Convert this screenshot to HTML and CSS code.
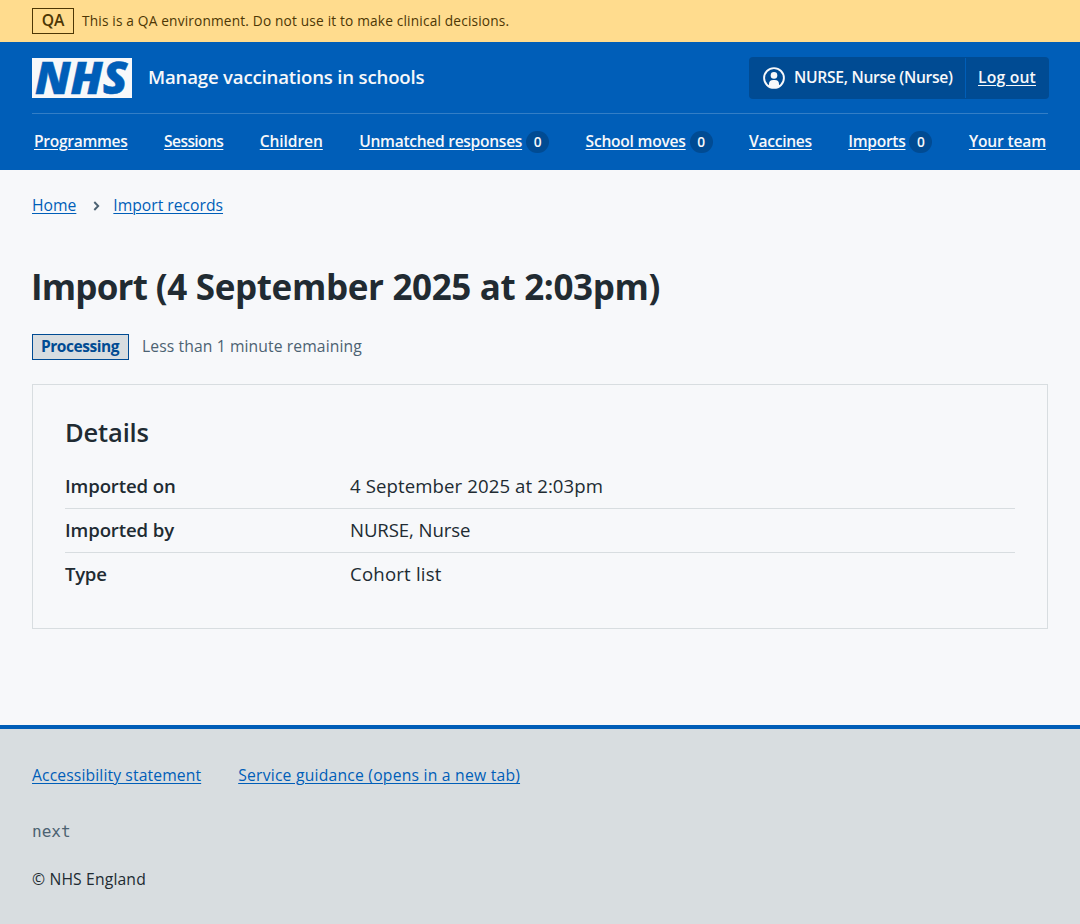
FILE: index.html
```html
<!DOCTYPE html>
<html lang="en">
<head>
<meta charset="utf-8">
<title>Import – Manage vaccinations in schools</title>
<link rel="stylesheet" href="styles.css">
</head>
<body>
<div class="environment">
  <strong class="environment-tag"><span>QA</span></strong>
  <span class="t-env">This is a QA environment. Do not use it to make clinical decisions.</span>
</div>
<header class="header">
  <div class="header-top">
    <svg class="logo" viewBox="0 0 100 40" width="100" height="40" role="img" aria-label="NHS">
      <rect class="logo-box" width="100" height="40"/>
      <text class="logo-text" x="3" y="35.7" textLength="92.5" lengthAdjust="spacingAndGlyphs">NHS</text>
    </svg>
    <span class="service">Manage vaccinations in schools</span>
    <div class="account">
      <div class="account-user">
        <svg width="22" height="22" viewBox="0 0 22 22" aria-hidden="true">
          <circle cx="11" cy="11" r="9.9" fill="none" stroke="#f7f8fa" stroke-width="1.9"/>
          <circle cx="11" cy="8.4" r="3.3" fill="#f7f8fa"/>
          <path d="M6 19.4V17a4.2 4 0 0 1 4.2-4h1.6a4.2 4 0 0 1 4.2 4v2.4Q11 22.3 6 19.4Z" fill="#f7f8fa"/>
        </svg>
        <span class="t-user">NURSE, Nurse (Nurse)</span>
      </div>
      <div class="account-out"><a class="t-logout" href="#">Log out</a></div>
    </div>
  </div>
  <nav class="nav">
    <div><a class="t-programmes" href="#">Programmes</a></div>
    <div><a class="t-sessions" href="#">Sessions</a></div>
    <div><a class="t-children" href="#">Children</a></div>
    <div><a class="t-unmatched" href="#">Unmatched responses</a><span class="count">0</span></div>
    <div><a class="t-moves" href="#">School moves</a><span class="count">0</span></div>
    <div><a class="t-vaccines" href="#">Vaccines</a></div>
    <div><a class="t-imports" href="#">Imports</a><span class="count">0</span></div>
    <div><a class="t-team" href="#">Your team</a></div>
  </nav>
</header>
<main class="main">
  <nav class="breadcrumb">
    <a href="#">Home</a>
    <svg width="7" height="10" viewBox="0 0 7 10" aria-hidden="true"><path d="M1.3 1 5.2 5 1.3 9" fill="none" stroke="#4c6272" stroke-width="1.9"/></svg>
    <a href="#">Import records</a>
  </nav>
  <h1 class="title"><span class="title-lead">Import</span> (4 September 2025 at 2:03pm)</h1>
  <div class="status">
    <strong class="tag">Processing</strong>
    <span class="t-remaining">Less than 1 minute remaining</span>
  </div>
  <section class="card">
    <h2 class="card-title">Details</h2>
    <dl class="summary">
      <div class="row"><dt>Imported on</dt><dd class="t-date">4 September 2025 at 2:03pm</dd></div>
      <div class="row"><dt>Imported by</dt><dd class="t-nurse">NURSE, Nurse</dd></div>
      <div class="row"><dt class="t-type">Type</dt><dd class="t-cohort">Cohort list</dd></div>
    </dl>
  </section>
</main>
<footer class="footer">
  <div class="footer-links"><a class="t-access" href="#">Accessibility statement</a><a class="t-guide" href="#">Service guidance (opens in a new tab)</a></div>
  <code class="version">next</code>
  <p class="copyright">© NHS England</p>
</footer>
</body>
</html>
```
FILE: styles.css
```css
* { box-sizing: border-box; }
body {
  margin: 0;
  min-height: 924px;
  display: flex;
  flex-direction: column;
  background: #f7f8fa;
  color: #212b32;
  font: 15.7px/24px "Open Sans", "Noto Sans", sans-serif;
  white-space: nowrap;
}
h1, h2, p, dl, dd { margin: 0; }
a { color: #005eb8; text-underline-offset: 2px; text-decoration-thickness: 1px; }

.environment {
  height: 42px;
  padding: 0 32px;
  display: flex;
  align-items: center;
  gap: 8px;
  background: #ffdc8e;
  color: #4d3705;
  font-size: 13.7px;
}
.environment-tag {
  width: 42px;
  height: 26px;
  display: grid;
  place-items: center;
  border: 1px solid #4d3705;
  font-size: 15.7px;
  font-weight: 600;
  line-height: 22px;
  padding-bottom: 2px;
}
.t-env { letter-spacing: 0.17px; }

.header {
  height: 128px;
  padding: 0 32px;
  background: #005eb8;
  color: #f7f8fa;
  font-weight: 600;
}
.header a { color: #f7f8fa; }
.header-top {
  height: 72px;
  display: flex;
  align-items: center;
  border-bottom: 1px solid #337ec6;
}
.logo { display: block; overflow: visible; }
.logo-box { fill: #f7f8fa; }
.logo-text {
  fill: #005eb8;
  stroke: #005eb8;
  stroke-width: 0.5;
  font: italic 800 45px "Open Sans", sans-serif;
}
.service { margin-left: 16px; padding-bottom: 2px; font-size: 18.6px; letter-spacing: -0.18px; }
.account {
  width: 300px;
  height: 42px;
  margin: 0 -1px 0 auto;
  display: flex;
  border-radius: 4px;
  background: #004b93;
}
.account-user {
  width: 217px;
  margin: 1px 0;
  padding-left: 14px;
  display: flex;
  align-items: center;
  gap: 9px;
  border-right: 1px solid #005eb8;
}
.account-out { flex: 1; display: flex; align-items: center; padding-left: 12px; }
.t-user { padding-bottom: 2px; letter-spacing: -0.32px; }
.t-logout { padding-bottom: 2px; letter-spacing: 0.2px; }
.nav {
  height: 56px;
  padding: 0 2px;
  display: flex;
  align-items: center;
  justify-content: space-between;
  font-size: 15.6px;
}
.nav div { display: flex; align-items: center; }
.nav a { padding-bottom: 2px; letter-spacing: -0.3px; }
.nav .t-sessions { letter-spacing: -0.6px; }
.nav .t-children { letter-spacing: -0.1px; }
.nav .t-moves { letter-spacing: -0.24px; }
.nav .t-team { letter-spacing: -0.17px; }
.count {
  width: 23px;
  height: 22px;
  margin-left: 4px;
  border-radius: 11px;
  background: #004b93;
  font-size: 13.7px;
  line-height: 22px;
  text-align: center;
}

.main { flex: 1; padding: 23px 32px 0; }
.breadcrumb { display: flex; align-items: center; }
.breadcrumb svg { margin: 2px 13px 0 17px; }
.title {
  margin: 44px 0 0 -1px;
  font-size: 35px;
  line-height: 52px;
  font-weight: 700;
  letter-spacing: -0.35px;
}
.title-lead { letter-spacing: -0.8px; }
.status { margin-top: 21px; display: flex; align-items: center; gap: 13px; color: #4c6272; }
.tag {
  width: 97px;
  height: 26px;
  padding-left: 8px;
  border: 1px solid #004b93;
  background: #d8dde0;
  color: #004b93;
  font-size: 15.5px;
  line-height: 23px;
  letter-spacing: -0.45px;
}
.t-remaining { padding-bottom: 2px; letter-spacing: 0.1px; }
.card { height: 245px; margin-top: 24px; padding: 29px 32px; border: 1px solid #d8dde0; }
.card-title { font-size: 25.5px; line-height: 36px; font-weight: 600; letter-spacing: -0.15px; }
.summary { margin-top: 15px; font-size: 18.6px; line-height: 28px; }
.row {
  height: 44px;
  padding-top: 7px;
  display: grid;
  grid-template-columns: 285px 1fr;
  border-bottom: 1px solid #d8dde0;
}
.row:last-child { border-bottom: 0; }
.row dt { font-weight: 600; letter-spacing: -0.12px; }
.row .t-type { letter-spacing: -0.3px; }
.t-date { letter-spacing: 0.1px; }
.t-nurse { letter-spacing: -0.1px; }
.t-cohort { letter-spacing: 0.2px; }

.footer { height: 199px; padding: 34px 32px 0; border-top: 4px solid #005eb8; background: #d8dde0; }
.footer-links { display: flex; gap: 37px; }
.t-access { letter-spacing: 0.12px; }
.t-guide { letter-spacing: 0.22px; }
.version { display: block; margin-top: 33px; color: #4c6272; font: 16px/24px "DejaVu Sans Mono", monospace; }
.copyright { margin-top: 23px; letter-spacing: 0.15px; }
```
